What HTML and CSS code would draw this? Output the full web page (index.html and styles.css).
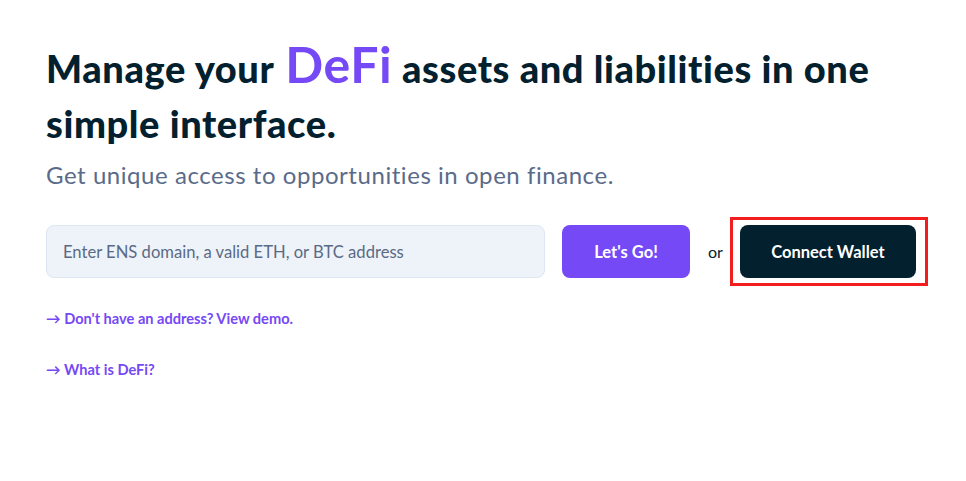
FILE: index.html
```html
<!DOCTYPE html>
<html lang="en">

<head>
    <meta charset="UTF-8">
    <meta name="viewport" content="width=device-width, initial-scale=1.0">
    <title>DeFi Dashboard</title>
    <link rel="stylesheet" href="styles.css">
</head>

<body>
    <div id="hero">
        <h1 class="headline">Manage your <span class="accent">DeFi</span> assets and liabilities in one simple interface.</h1>
        <p class="subtitle">Get unique access to opportunities in open finance.</p>

        <div class="search-row">
            <input type="text" class="address-input" placeholder="Enter ENS domain, a valid ETH, or BTC address">
            <button class="go-btn">Let's Go!</button>
            <span class="or">or</span>
            <div class="highlight">
                <button class="connect-btn">Connect Wallet</button>
            </div>
        </div>

        <a href="#" class="link demo-link">&rarr; Don't have an address? View demo.</a>
        <a href="#" class="link">&rarr; What is DeFi?</a>
    </div>
</body>
</html>
```

FILE: styles.css
```css
body {
    font-family: Lato, "Open Sans", sans-serif;
    background-color: #fff;
    margin: 0;
    color: #03202f;
}

#hero {
    padding: 39px 46px 0 46px;
    width: 880px;
}

.headline {
    font-size: 38px;
    font-weight: 900;
    line-height: 55px;
    margin: 0;
    letter-spacing: 0.6px;
}

.accent {
    color: #7549f5;
    font-size: 50px;
    font-weight: 700;
    line-height: 1;
    margin-left: 2px;
}

.subtitle {
    font-size: 24px;
    color: #5a6b8a;
    margin: 9px 0 0 0;
    line-height: 30px;
    letter-spacing: 0.55px;
}

.search-row {
    display: flex;
    align-items: center;
    margin-top: 27px;
}

.address-input {
    flex-shrink: 0;
    width: 499px;
    height: 53px;
    box-sizing: border-box;
    background-color: #eef3fa;
    border: 1px solid #dde6f3;
    border-radius: 8px;
    padding: 0 16px;
    font-family: Lato, sans-serif;
    font-size: 16.6px;
    color: #03202f;
}

.address-input::placeholder {
    color: #5b6a84;
}

.go-btn, .connect-btn {
    flex-shrink: 0;
    height: 53px;
    border: none;
    border-radius: 8px;
    color: #fff;
    font-family: Lato, sans-serif;
    font-size: 16.5px;
    font-weight: 700;
    cursor: pointer;
}

.go-btn {
    width: 128px;
    margin-left: 17px;
    background-color: #7549f5;
}

.or {
    font-size: 16px;
    margin: 0 7px 0 18px;
}

.highlight {
    border: 3px solid #f21d1d;
    padding: 5px 9px 5px 7px;
}

.connect-btn {
    width: 176px;
    display: block;
    background-color: #03202f;
}

.link {
    display: block;
    color: #7549f5;
    font-size: 14.6px;
    font-weight: 700;
    text-decoration: none;
    width: max-content;
}

.demo-link {
    margin: 24px 0 34px 0;
}
```
